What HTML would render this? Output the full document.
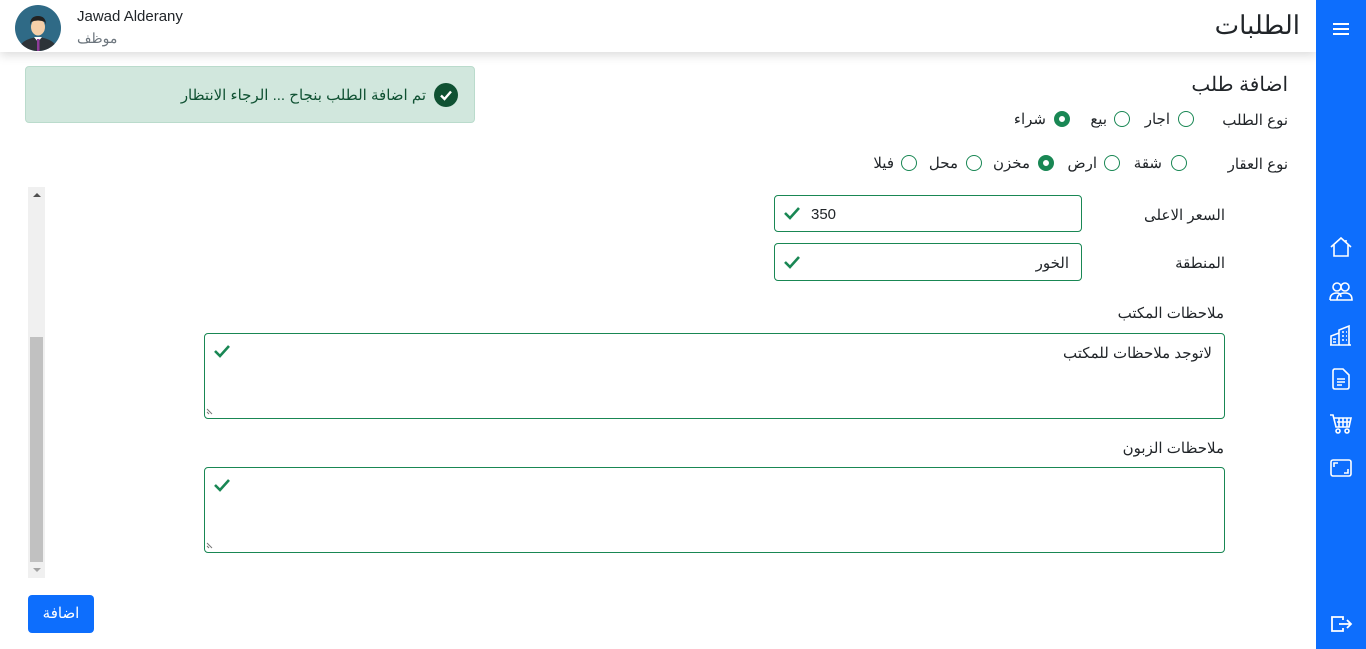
<!DOCTYPE html>
<html><head><meta charset="utf-8"><style>
*{box-sizing:border-box;margin:0;padding:0}
body{width:1366px;height:649px;overflow:hidden;background:#fff;font-family:"Liberation Sans","Noto Sans CJK SC",sans-serif;color:#212529;position:relative}
.a{position:absolute}
.t{font-size:15px;white-space:nowrap}
.r{position:absolute;width:16px;height:16px;border:1px solid #198754;border-radius:50%;background:#fff}
.r.on{border:5px solid #198754}
.inp{position:absolute;border:1px solid #198754;border-radius:4px;background:#fff}
.ck{position:absolute}
</style></head><body>
<div class="a" style="left:0;top:0;width:1316px;height:52px;background:#fff;box-shadow:0 3px 10px rgba(0,0,0,.15);z-index:2"></div>
<svg class="a" style="left:15px;top:5px;z-index:3" width="46" height="46" viewBox="0 0 46 46">
<circle cx="23" cy="23" r="23" fill="#2f6a86"/>
<clipPath id="c"><circle cx="23" cy="23" r="23"/></clipPath>
<g clip-path="url(#c)"><path d="M3 46 Q5 34 23 32 Q41 34 43 46Z" fill="#2d3338"/><path d="M19 32 L23 37 L27 32Z" fill="#fff"/><rect x="22" y="34" width="2.5" height="12" fill="#8e3c9a"/>
<ellipse cx="23" cy="22" rx="7" ry="8.5" fill="#f5cfa8"/><path d="M15 20 Q15 11 23 11 Q31 11 31 20 L30 17 Q23 14 16 17Z" fill="#222"/></g></svg>
<div class="a t" style="left:77px;top:8px;z-index:3">Jawad Alderany</div>
<div class="a t" style="left:77px;top:30px;z-index:3;color:#6c757d;font-size:14px">موظف</div>
<div class="a" style="right:66px;top:10px;font-size:26px;z-index:3">الطلبات</div>
<div class="a" style="left:1316px;top:0;width:50px;height:649px;background:#0d6efd;z-index:4">
<svg class="a" style="left:16px;top:21px" width="18" height="16" viewBox="0 0 18 16" stroke="#fff" stroke-width="2"><path d="M1 3H17M1 8H17M1 13H17"/></svg>
<svg class="a" style="left:13px;top:236px" width="24" height="22" viewBox="0 0 24 22" fill="none" stroke="#fff" stroke-width="1.6"><path d="M2 11 L12 2 L22 11 M5 9 V20 H19 V9 M17 4 V7"/></svg>
<svg class="a" style="left:13px;top:281px" width="24" height="22" viewBox="0 0 24 22" fill="none" stroke="#fff" stroke-width="1.6"><circle cx="8" cy="6" r="4"/><circle cx="16" cy="6" r="4"/><path d="M1 19 Q1 12 8 12 Q12 12 12 16 M8 19 Q8 12 16 12 Q23 12 23 19Z M1 19 H9"/></svg>
<svg class="a" style="left:13px;top:324px" width="24" height="22" viewBox="0 0 24 22" fill="none" stroke="#fff" stroke-width="1.6"><path d="M2 21 V12 L10 9 V21 M10 21 V6 L20 2 V21 M1 21 H22 M13 8h2M17 8h1M13 12h2M17 12h1M13 16h2M17 16h1M4 15h3M4 18h3"/></svg>
<svg class="a" style="left:15px;top:368px" width="20" height="22" viewBox="0 0 20 22" fill="none" stroke="#fff" stroke-width="1.6"><path d="M3 1 H12 L18 7 V19 Q18 21 16 21 H4 Q2 21 2 19 V3 Q2 1 4 1Z M6 11H14M6 14H14M6 17H11"/></svg>
<svg class="a" style="left:13px;top:413px" width="24" height="22" viewBox="0 0 24 22" fill="none" stroke="#fff" stroke-width="1.6"><path d="M1 2 H4 L7 14 H20 L22 5 H5 M8 9H21M10 5V14M14 5V14M18 5V14"/><circle cx="9" cy="18" r="2"/><circle cx="18" cy="18" r="2"/></svg>
<svg class="a" style="left:13px;top:458px" width="24" height="20" viewBox="0 0 24 20" fill="none" stroke="#fff" stroke-width="1.6"><rect x="2" y="2" width="20" height="16" rx="2"/><path d="M5 9V5H9M19 11V15H15"/></svg>
<svg class="a" style="left:14px;top:614px" width="24" height="20" viewBox="0 0 24 20" fill="none" stroke="#fff" stroke-width="1.8"><path d="M13 6V3H2V17H13V14M9 10H21M17 6L21 10L17 14"/></svg>
</div>
<div class="a" style="left:25px;top:66px;width:450px;height:57px;background:#d1e7dd;border:1px solid #badbcc;border-radius:4px"></div>
<svg class="a" style="left:434px;top:83px" width="24" height="24" viewBox="0 0 24 24"><circle cx="12" cy="12" r="12" fill="#0f5132"/><path d="M7 12.5 L10.5 16 L17 8.5" fill="none" stroke="#fff" stroke-width="2.4"/></svg>
<div class="a t" style="right:940px;top:86px;color:#0f5132">تم اضافة الطلب بنجاح ... الرجاء الانتظار</div>
<div class="a" style="right:78px;top:72px;font-size:20px">اضافة طلب</div>
<div class="a t" style="right:78px;top:111px">نوع الطلب</div>
<div class="r" style="left:1178px;top:111px"></div><div class="a t" style="right:196px;top:110px">اجار</div>
<div class="r" style="left:1114px;top:111px"></div><div class="a t" style="right:259px;top:110px">بيع</div>
<div class="r on" style="left:1054px;top:111px"></div><div class="a t" style="right:320px;top:110px">شراء</div>
<div class="a t" style="right:78px;top:155px">نوع العقار</div>
<div class="r" style="left:1171px;top:155px"></div><div class="a t" style="right:204px;top:154px">شقة</div>
<div class="r" style="left:1104px;top:155px"></div><div class="a t" style="right:269px;top:154px">ارض</div>
<div class="r on" style="left:1038px;top:155px"></div><div class="a t" style="right:336px;top:154px">مخزن</div>
<div class="r" style="left:966px;top:155px"></div><div class="a t" style="right:408px;top:154px">محل</div>
<div class="r" style="left:901px;top:155px"></div><div class="a t" style="right:472px;top:154px">فيلا</div>
<div class="a" style="left:28px;top:187px;width:17px;height:391px;background:#f0f0f0"></div>
<div class="a" style="left:30px;top:337px;width:13px;height:225px;background:#c1c1c1"></div>
<div class="a" style="left:33px;top:193px;width:0;height:0;border:4px solid transparent;border-bottom-color:#505050;border-top:0"></div>
<div class="a" style="left:33px;top:568px;width:0;height:0;border:4px solid transparent;border-top-color:#a3a3a3;border-bottom:0"></div>
<div class="a t" style="right:141px;top:206px">السعر الاعلى</div>
<div class="inp" style="left:774px;top:195px;width:308px;height:37px"></div>
<div class="a t" style="left:811px;top:206px">350</div>
<div class="a t" style="right:141px;top:254px">المنطقة</div>
<div class="inp" style="left:774px;top:243px;width:308px;height:38px"></div>
<div class="a t" style="right:297px;top:254px">الخور</div>
<div class="a t" style="right:142px;top:304px">ملاحظات المكتب</div>
<div class="inp" style="left:204px;top:333px;width:1021px;height:86px"></div>
<div class="a t" style="right:154px;top:344px">لاتوجد ملاحظات للمكتب</div>
<div class="a t" style="right:142px;top:439px">ملاحظات الزبون</div>
<div class="inp" style="left:204px;top:467px;width:1021px;height:86px"></div>
<svg class="a" style="left:206px;top:406px" width="9" height="9"><path d="M1 3L6 8M1 6L3 8" stroke="#777"/></svg>
<svg class="a" style="left:206px;top:540px" width="9" height="9"><path d="M1 3L6 8M1 6L3 8" stroke="#777"/></svg>
<svg class="ck" style="left:783px;top:206px" width="18" height="14"><path d="M2 7L7 12L16 2" fill="none" stroke="#198754" stroke-width="2.6"/></svg>
<svg class="ck" style="left:783px;top:255px" width="18" height="14"><path d="M2 7L7 12L16 2" fill="none" stroke="#198754" stroke-width="2.6"/></svg>
<svg class="ck" style="left:213px;top:344px" width="18" height="14"><path d="M2 7L7 12L16 2" fill="none" stroke="#198754" stroke-width="2.6"/></svg>
<svg class="ck" style="left:213px;top:478px" width="18" height="14"><path d="M2 7L7 12L16 2" fill="none" stroke="#198754" stroke-width="2.6"/></svg>
<div class="a" style="left:28px;top:595px;width:66px;height:38px;background:#0d6efd;border-radius:4px;color:#fff;font-size:15px;text-align:center;line-height:37px">اضافة</div>
</body></html>
